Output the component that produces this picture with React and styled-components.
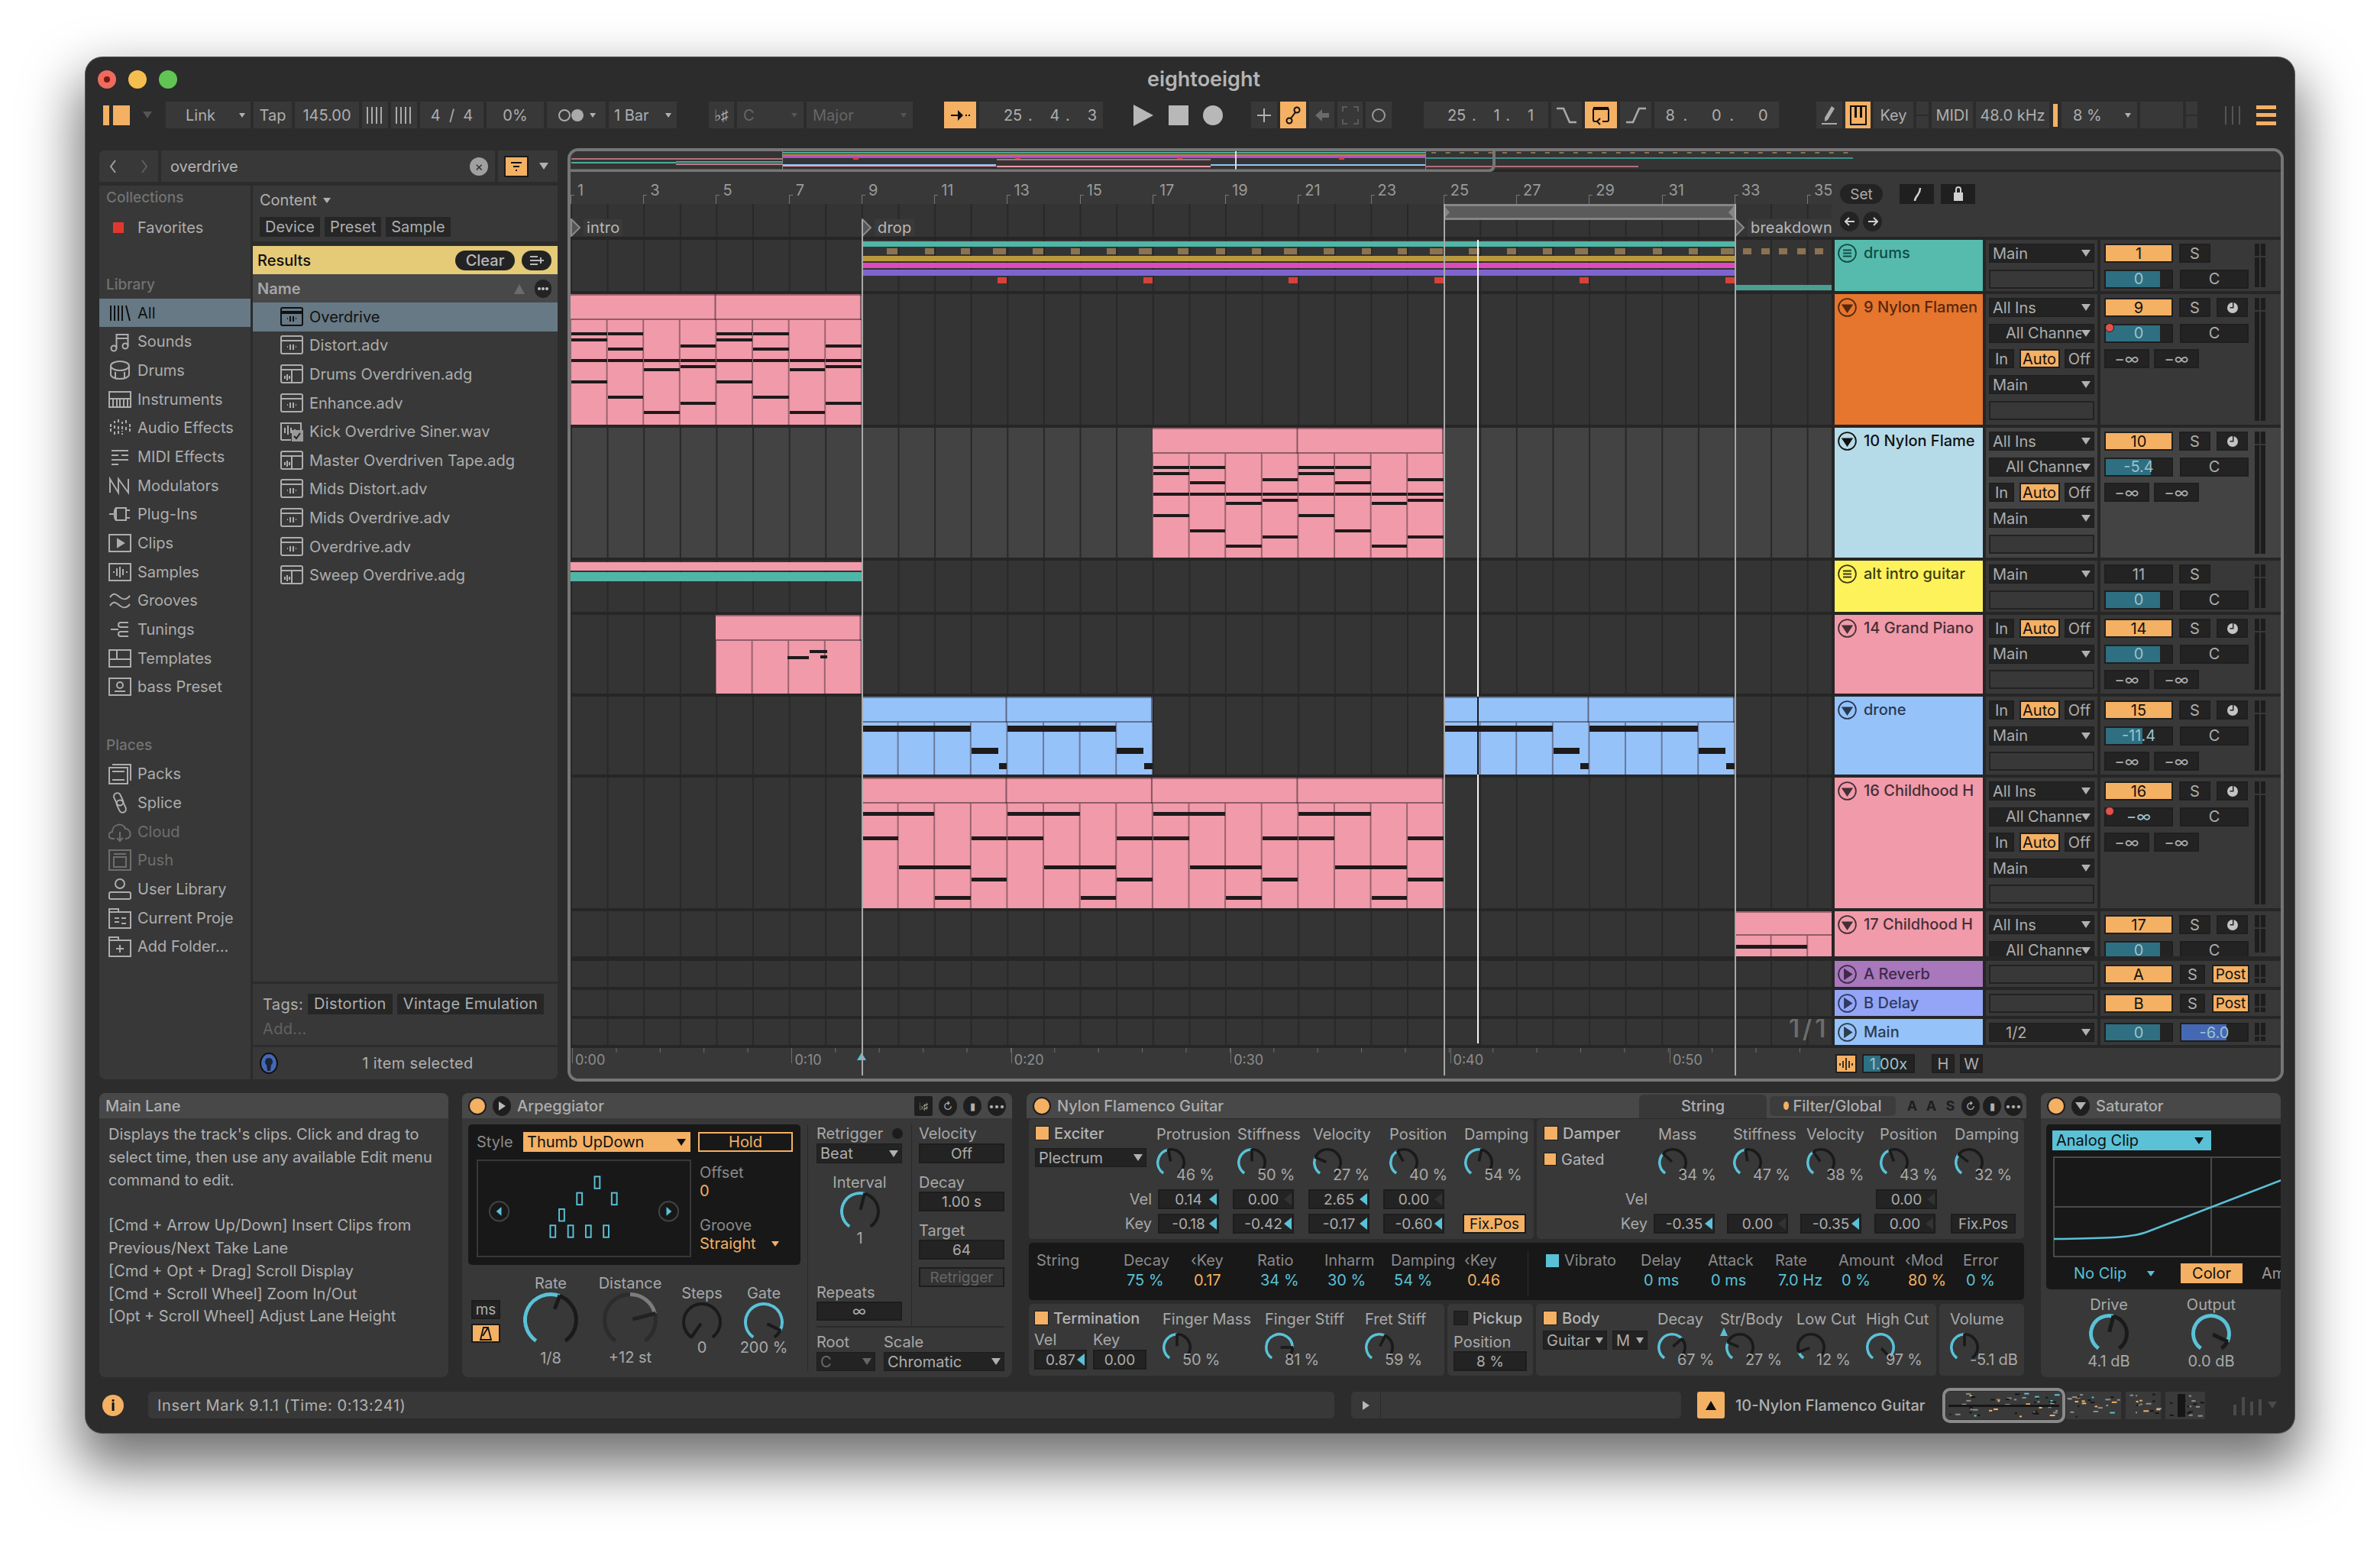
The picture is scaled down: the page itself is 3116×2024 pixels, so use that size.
import React from 'react';
import styled, { createGlobalStyle } from 'styled-components';

const ORANGE = '#f4b063';
const CYAN = '#5bc1d6';
const PINK = '#f19aa9';
const BLUE = '#96c2fa';
const BAR = 47.62;

const GlobalStyle = createGlobalStyle`
  html, body { margin: 0; background: #fff; }
  body { font-family: Inter, "Liberation Sans", sans-serif; font-size: 20px; color: #aeaeae; }
`;

const Page = styled.div`
  width: 3116px;
  height: 2024px;
  padding: 75px 0 0 112px;
  box-sizing: border-box;
  overflow: hidden;
`;

const Window = styled.div`
  width: 2892px;
  height: 1801px;
  background: #2c2c2c;
  border-radius: 22px;
  box-shadow: 0 0 0 1px #555, 0 36px 70px 10px rgba(0, 0, 0, 0.55);
  display: flex;
  flex-direction: column;
`;

/* title bar */
const TitleBar = styled.div`
  height: 58px;
  display: grid;
  grid-template-columns: 1fr auto 1fr;
  align-items: center;
  padding: 0 16px;
`;
const Lights = styled.div`
  display: flex;
  gap: 16px;
`;
const Light = styled.div`
  width: 24px;
  height: 24px;
  border-radius: 50%;
  background: ${p => p.$c};
  display: flex;
  align-items: center;
  justify-content: center;
  &::after {
    content: '';
    width: ${p => (p.$dot ? 8 : 0)}px;
    height: ${p => (p.$dot ? 8 : 0)}px;
    border-radius: 50%;
    background: #7a1510;
  }
`;
const Title = styled.div`
  font-size: 27px;
  font-weight: 600;
  color: #b4b4b4;
  padding-left: 36px;
  margin-top: -2px;
`;

/* toolbar */
const Toolbar = styled.div`
  height: 35px;
  display: flex;
  gap: 4px;
  padding-left: 23px;
`;
const Cell = styled.div`
  width: ${p => p.$w}px;
  margin-left: ${p => p.$ml || 0}px;
  flex: none;
  height: 35px;
  background: ${p => (p.$on ? ORANGE : p.$bare ? 'transparent' : '#383838')};
  color: ${p => (p.$on ? '#111' : p.$dim ? '#666' : '#aeaeae')};
  display: flex;
  align-items: center;
  justify-content: ${p => p.$align || 'center'};
  gap: 6px;
  padding: 0 ${p => p.$pad || 0}px 0 ${p => p.$pl || p.$pad || 0}px;
  box-sizing: border-box;
  white-space: pre;
  word-spacing: ${p => p.$ws || 0}px;
`;
const SmallCell = styled.div`
  width: ${p => p.$w}px;
  flex: none;
  height: 35px;
  display: flex;
  flex-direction: column;
  gap: 2px;
  &::before, &::after { content: ''; flex: 1; background: #383838; }
`;
const Caret = styled.span`
  flex: none;
  width: 0;
  height: 0;
  border-left: ${p => (p.$s || 10) / 2}px solid transparent;
  border-right: ${p => (p.$s || 10) / 2}px solid transparent;
  border-top: ${p => ((p.$s || 10) * 3) / 4}px solid ${p => p.$c || '#b0b0b0'};
`;
const Transport = styled.div`
  width: 117px;
  margin-left: 36px;
  flex: none;
  display: flex;
  align-items: center;
  justify-content: space-between;
`;
const Spacer = styled.div`
  flex: 1;
`;

/* main row */
const MainRow = styled.div`
  margin-top: 26px;
  padding-left: 18px;
  height: 1222px;
  display: flex;
  align-items: flex-start;
`;

/* browser */
const Browser = styled.div`
  width: 600px;
  margin-top: 3px;
  height: 1216px;
  flex: none;
  display: flex;
  flex-direction: column;
  gap: 5px;
`;
const SearchRow = styled.div`
  height: 41px;
  display: flex;
  gap: 4px;
`;
const NavBox = styled.div`
  width: 77px;
  flex: none;
  background: #383838;
  display: flex;
  align-items: center;
  justify-content: space-between;
  padding: 0 12px 0 12px;
  box-sizing: border-box;
  border-radius: 6px 0 0 0;
`;
const SearchField = styled.div`
  flex: 1;
  background: #383838;
  display: flex;
  align-items: center;
  justify-content: space-between;
  padding: 0 9px 0 12px;
  font-size: 20px;
  color: #b4b4b4;
`;
const ClearDot = styled.div`
  width: 24px;
  height: 24px;
  border-radius: 50%;
  background: #a0a0a0;
  color: #2c2c2c;
  font-size: 17px;
  line-height: 24px;
  text-align: center;
`;
const FilterBox = styled.div`
  width: 78px;
  flex: none;
  background: #383838;
  display: flex;
  align-items: center;
  gap: 14px;
  padding-left: 8px;
  box-sizing: border-box;
`;
const FilterBtn = styled.div`
  width: 32px;
  height: 28px;
  background: ${ORANGE};
  border: 2px solid #1a1a1a;
  box-sizing: border-box;
  display: flex;
  align-items: center;
  justify-content: center;
`;
const BrowserBody = styled.div`
  flex: 1;
  display: flex;
  gap: 3px;
  min-height: 0;
`;
const Sidebar = styled.div`
  width: 198px;
  flex: none;
  background: #383838;
  border-radius: 0 0 0 8px;
  overflow: hidden;
`;
const SideHead = styled.div`
  height: 32px;
  line-height: 32px;
  margin-top: ${p => p.$mt || 0}px;
  padding-left: 9px;
  font-size: 19px;
  font-weight: 500;
  color: #727272;
`;
const SideRow = styled.div`
  height: 37.7px;
  display: flex;
  align-items: center;
  gap: 8px;
  padding-left: 12px;
  margin-top: ${p => p.$mt || 0}px;
  background: ${p => (p.$sel ? '#667985' : 'none')};
  color: ${p => (p.$sel ? '#111' : p.$dim ? '#6e6e6e' : '#adadad')};
  font-size: 20px;
  white-space: nowrap;
`;
const SideText = styled.span`
  width: 128px;
  overflow: hidden;
`;
const SideIcon = styled.svg`
  width: 30px;
  height: 30px;
  flex: none;
  fill: none;
  stroke: currentColor;
  stroke-width: 2;
`;
const ContentCol = styled.div`
  flex: 1;
  display: flex;
  flex-direction: column;
  min-width: 0;
`;
const ContentTop = styled.div`
  height: 73px;
  background: #383838;
  margin-bottom: 6px;
  padding: 7px 9px;
  box-sizing: border-box;
`;
const ContentTitle = styled.div`
  height: 24px;
  line-height: 24px;
  display: flex;
  align-items: center;
  gap: 8px;
  color: #b0b0b0;
`;
const Tabs = styled.div`
  display: flex;
  gap: 6px;
  margin-top: 10px;
`;
const Tab = styled.div`
  height: 26px;
  line-height: 26px;
  padding: 0 7px;
  background: #262626;
  color: #adadad;
`;
const ResultsBar = styled.div`
  height: 37px;
  background: #e5ca78;
  display: flex;
  align-items: center;
  gap: 9px;
  padding: 0 8px 0 6px;
  color: #111;
  font-weight: 500;
`;
const Pill = styled.div`
  height: ${p => p.$h || 26}px;
  width: ${p => p.$w}px;
  border-radius: 13px;
  background: #232323;
  color: #b8b8b8;
  text-align: center;
  display: flex;
  align-items: center;
  justify-content: center;
  flex: none;
`;
const NameHead = styled.div`
  height: 38px;
  background: #484848;
  display: flex;
  align-items: center;
  padding: 0 8px 0 6px;
  font-weight: 600;
  color: #a6a6a6;
`;
const SortMark = styled.span`
  width: 0;
  height: 0;
  border-left: 7px solid transparent;
  border-right: 7px solid transparent;
  border-bottom: 13px solid #6c6c6c;
  margin-right: 13px;
`;
const FileList = styled.div`
  flex: 1;
  background: #383838;
`;
const FileRow = styled.div`
  height: 37.6px;
  display: flex;
  align-items: center;
  gap: 8px;
  padding-left: 36px;
  background: ${p => (p.$sel ? '#667985' : 'none')};
  color: ${p => (p.$sel ? '#111' : '#adadad')};
  &:first-child { margin-top: -1px; }
`;
const TagsBox = styled.div`
  height: 80px;
  margin-top: 3px;
  background: #383838;
  padding: 13px 13px;
  box-sizing: border-box;
  letter-spacing: 0.35px;
`;
const TagLine = styled.div`
  display: flex;
  gap: 6px;
  align-items: center;
`;
const TagChip = styled.div`
  height: 27px;
  line-height: 27px;
  padding: 0 8px;
  background: #262626;
`;
const AddTag = styled.div`
  margin-top: 7px;
  color: #626262;
`;
const BrowserFoot = styled.div`
  height: 42px;
  margin-top: 3px;
  background: #383838;
  border-radius: 0 0 8px 0;
  display: flex;
  align-items: center;
  padding-left: 9px;
`;
const FootText = styled.div`
  flex: 1;
  text-align: center;
  color: #b0b0b0;
  letter-spacing: 0.35px;
`;

/* arrangement */
const Arrangement = styled.div`
  margin-left: 13px;
  width: 2247px;
  height: 1222px;
  flex: none;
  border: 4px solid #767676;
  border-radius: 14px;
  box-sizing: border-box;
  background: #262626;
  position: relative;
  overflow: hidden;
`;
const Overview = styled.svg`
  display: block;
  width: 2239px;
  height: 27px;
  background: #343434;
`;
const TopArea = styled.div`
  display: flex;
  height: 85px;
  background: #383838;
  margin-bottom: 4px;
`;
const TopLeft = styled.div`
  width: 1651px;
  flex: none;
`;
const Ruler = styled.div`
  height: 42px;
  display: flex;
  overflow: hidden;
`;
const RulerCell = styled.div`
  width: ${BAR * 2}px;
  flex: none;
  box-sizing: border-box;
  font-size: 20px;
  color: #9a9a9a;
  padding: 12px 0 0 9px;
  position: relative;
  &::before {
    content: '';
    position: absolute;
    left: 0;
    bottom: 0;
    height: 12px;
    width: 5px;
    border-left: 1px solid #777;
    border-top: 1px solid #777;
    box-sizing: border-box;
  }
`;
const gridBg = (bg, width = BAR) => `
  background-color: ${bg};
  background-image: linear-gradient(to right, #282828 0 2px, transparent 2px);
  background-size: ${width}px 100%;
`;
const LocatorLane = styled.div`
  height: 43px;
  position: relative;
  overflow: hidden;
  ${gridBg('#343434')}
`;
const LoopBrace = styled.div`
  position: absolute;
  left: 1143px;
  width: 381px;
  top: 0;
  height: 21px;
  background: #5b5b5b;
  border: 3px solid #858585;
  border-left-width: 2px;
  border-right-width: 2px;
  box-sizing: border-box;
  display: flex;
  justify-content: space-between;
  align-items: center;
  &::before, &::after {
    content: '';
    width: 0;
    height: 0;
    border-top: 7px solid transparent;
    border-bottom: 7px solid transparent;
  }
  &::before { border-left: 6px solid #858585; }
  &::after { border-right: 6px solid #858585; }
`;
const Locator = styled.div`
  position: absolute;
  left: ${p => p.$x}px;
  top: 19px;
  height: 24px;
  display: flex;
  align-items: center;
  gap: 3px;
`;
const LocatorTag = styled.div`
  background: #3a3a3a;
  color: #b8b8b8;
  line-height: 22px;
  height: 22px;
  padding: 0 4px;
  letter-spacing: 0.2px;
`;
const SideTools = styled.div`
  flex: 1;
  padding: 16px 0 0 11px;
  box-sizing: border-box;
`;
const ToolLine = styled.div`
  display: flex;
  gap: ${p => p.$gap || 9}px;
  margin-bottom: 10px;
`;
const RoundTool = styled.div`
  height: 26px;
  width: ${p => p.$w}px;
  margin-right: ${p => p.$mr || 0}px;
  border-radius: 13px;
  background: #232323;
  color: #aaa;
  font-size: 19px;
  display: flex;
  align-items: center;
  justify-content: center;
`;
const SquareTool = styled.div`
  height: 26px;
  width: 45px;
  background: #1f1f1f;
  display: flex;
  align-items: center;
  justify-content: center;
`;
const TrackRow = styled.div`
  height: ${p => p.$h}px;
  margin-bottom: ${p => p.$gap || 4}px;
  display: flex;
  overflow: hidden;
`;
const Lane = styled.div`
  width: 1651px;
  flex: none;
  position: relative;
  overflow: hidden;
  ${p => gridBg(p.$sel ? '#434343' : '#343434')}
`;
const Head = styled.div`
  width: 194px;
  margin-left: 4px;
  flex: none;
  background: ${p => p.$c};
  color: ${p => p.$ink};
  display: flex;
  align-items: flex-start;
  padding: 5px 8px 0 4px;
  box-sizing: border-box;
  font-weight: 500;
`;
const HeadGlyph = styled.svg`
  width: 25px;
  height: 25px;
  flex: none;
  margin-right: 9px;
  fill: none;
  stroke: currentColor;
  stroke-width: 1.8;
`;
const HeadName = styled.div`
  line-height: 25px;
  white-space: nowrap;
  overflow: hidden;
  flex: 1;
`;
const Routing = styled.div`
  width: 146px;
  margin-left: 4px;
  flex: none;
  background: ${p => (p.$sel ? '#434343' : '#383838')};
  padding: 5px 4px 0;
  box-sizing: border-box;
  display: flex;
  flex-direction: column;
  gap: 8.7px;
`;
const MixerCol = styled.div`
  width: 237px;
  margin-left: 4px;
  flex: none;
  background: ${p => (p.$sel ? '#434343' : '#383838')};
  padding: 5px 0 5px 5px;
  box-sizing: border-box;
  display: flex;
`;
const MixRows = styled.div`
  width: 189px;
  flex: none;
  display: flex;
  flex-direction: column;
  gap: 8.7px;
`;
const MixLine = styled.div`
  display: flex;
  gap: ${p => p.$gap || 9}px;
`;
const Sel = styled.div`
  height: ${p => p.$h || 25}px;
  margin-top: ${p => p.$mt || 0}px;
  flex: none;
  width: ${p => p.$w ? p.$w + 'px' : 'auto'};
  background: #232323;
  box-sizing: border-box;
  border: 1px solid #1d1d1d;
  display: flex;
  align-items: center;
  justify-content: space-between;
  padding: 0 4px 0 ${p => p.$lp || 4}px;
  color: ${p => p.$dim ? '#6a6a6a' : '#adadad'};
  white-space: nowrap;
  overflow: hidden;
`;
const ClipText = styled.span`
  overflow: hidden;
  white-space: nowrap;
  flex: 1;
  min-width: 0;
`;
const BlankBox = styled.div`
  height: 25px;
  flex: none;
  background: #383838;
  border: 2px solid #222;
  box-sizing: border-box;
`;
const IoLine = styled.div`
  display: flex;
  justify-content: space-between;
`;
const Btn = styled.div`
  height: 25px;
  width: ${p => p.$w}px;
  margin-left: ${p => p.$ml || 0}px;
  flex: none;
  box-sizing: border-box;
  background: ${p => (p.$on ? ORANGE : '#232323')};
  color: ${p => (p.$on ? '#111' : '#adadad')};
  border: 2px solid #1f1f1f;
  display: flex;
  align-items: center;
  justify-content: center;
  font-size: ${p => p.$fs || 20}px;
  white-space: nowrap;
`;
const Fader = styled.div`
  height: 25px;
  width: ${p => p.$w || 90}px;
  flex: none;
  box-sizing: border-box;
  background: #232323;
  border: 2px solid #1f1f1f;
  position: relative;
  display: flex;
  align-items: center;
  justify-content: center;
  color: #9cc2cc;
`;
const FaderFill = styled.div`
  position: absolute;
  left: 0;
  top: 0;
  bottom: 0;
  background: ${p => p.$c};
`;
const FaderText = styled.span`
  position: relative;
`;
const ClipDot = styled.div`
  position: absolute;
  left: -1px;
  top: -3px;
  width: 10px;
  height: 10px;
  border-radius: 50%;
  background: #e6504a;
  border: 1px solid #222;
`;
const Meter = styled.div`
  width: 14px;
  margin-left: 8px;
  flex: none;
  background:
    linear-gradient(#383838, #383838) 0 16px / 100% 2px no-repeat,
    linear-gradient(to right, #1d1d1d 0 6px, #383838 6px 8px, #1d1d1d 8px);
`;
const Clip = styled.div`
  position: absolute;
  top: ${p => p.$top || 0}px;
  bottom: 0;
  background: ${p => p.$c};
  box-shadow: inset 0 2px 0 rgba(60, 30, 40, 0.45);
  overflow: hidden;
`;
const ClipHeader = styled.div`
  height: ${p => p.$h}px;
  background-image: linear-gradient(to right, rgba(50, 30, 40, 0.55) 0 2px, transparent 2px);
  background-size: ${BAR * 4}px 100%;
  background-position: -2px 0;
  border-bottom: 2px solid rgba(50, 30, 40, 0.5);
`;
const ClipNotes = styled.div`
  position: absolute;
  left: 0;
  right: 0;
  top: ${p => p.$top}px;
  bottom: 0;
  background-image: linear-gradient(to right, rgba(50, 30, 40, 0.45) 0 1.5px, transparent 1.5px);
  background-size: ${BAR}px 100%;
  background-position: -1px 0;
`;
const Note = styled.div`
  position: absolute;
  background: #1e1a1b;
`;
const Strip = styled.div`
  position: absolute;
  left: 381px;
  width: 1143px;
  top: ${p => p.$y}px;
  height: ${p => p.$h}px;
  background: ${p => p.$c};
`;
const Block = styled.div`
  position: absolute;
  background: ${p => p.$c};
`;
const ViewLabel = styled.div`
  position: absolute;
  right: 4px;
  bottom: 1px;
  font-size: 36px;
  font-weight: 500;
  letter-spacing: 3px;
  color: #6c6c6c;
`;
const VLine = styled.div`
  position: absolute;
  width: 2px;
  background: ${p => p.$c};
  pointer-events: none;
`;
const BottomRow = styled.div`
  height: 40px;
  display: flex;
  background: #383838;
`;
const TimeRuler = styled.div`
  width: 1651px;
  flex: none;
  display: flex;
  padding-left: 2px;
  box-sizing: border-box;
  position: relative;
  overflow: hidden;
  background-image: linear-gradient(to right, #6e6e6e 0 1px, transparent 1px);
  background-size: 57.4px 6px;
  background-position: 2px 0;
  background-repeat: repeat-x;
`;
const TimeCell = styled.div`
  width: 287.4px;
  flex: none;
  box-sizing: border-box;
  font-size: 18px;
  color: #8c8c8c;
  padding: 4px 0 0 3px;
  height: 20px;
  border-left: 1px solid #6e6e6e;
  line-height: 24px;
`;
const PlayStart = styled.div`
  position: absolute;
  left: 375px;
  top: 6px;
  width: 0;
  height: 0;
  border-left: 6px solid transparent;
  border-right: 6px solid transparent;
  border-bottom: 10px solid ${CYAN};
`;
const ZoomTools = styled.div`
  margin-left: 5px;
  padding-top: 8px;
  display: flex;
  gap: 7px;
`;

/* bottom devices */
const DeviceRow = styled.div`
  margin-top: 15px;
  padding-left: 18px;
  height: 372px;
  display: flex;
  align-items: stretch;
`;
const Panel = styled.div`
  width: ${p => p.$w}px;
  margin-left: ${p => p.$ml || 0}px;
  flex: none;
  background: #383838;
  border-radius: 8px;
  overflow: hidden;
  display: flex;
  flex-direction: column;
`;
const PanelHead = styled.div`
  height: 33px;
  flex: none;
  background: #484848;
  display: flex;
  align-items: center;
  padding: 0 8px;
  color: #aeaeae;
  font-weight: 500;
  gap: 8px;
`;
const LaneText = styled.div`
  padding: 7px 12px 0;
  line-height: 29.8px;
  font-size: 20px;
  color: #b0b0b0;
  white-space: pre-line;
`;
const PowerDot = styled.div`
  width: 24px;
  height: 24px;
  flex: none;
  border-radius: 50%;
  background: ${ORANGE};
  border: 2px solid #1e1e1e;
  box-sizing: border-box;
`;
const RoundIcon = styled.div`
  width: 24px;
  height: 26px;
  flex: none;
  border-radius: ${p => (p.$square ? '2px' : '50%')};
  background: #1e1e1e;
  display: flex;
  align-items: center;
  justify-content: center;
  color: #b0b0b0;
  font-size: 13px;
`;
const HeadIcons = styled.div`
  margin-left: ${p => p.$ml || 'auto'};
  display: flex;
  gap: ${p => p.$gap || 8}px;
  align-items: center;
`;
const Tri = styled.span`
  flex: none;
  width: 0;
  height: 0;
  border-top: 6px solid transparent;
  border-bottom: 6px solid transparent;
  border-left: 9px solid #b8b8b8;
`;

const ArpBody = styled.div`
  flex: 1;
  display: flex;
  padding-left: 8px;
`;
const ArpLeft = styled.div`
  width: 435px;
  flex: none;
  display: flex;
  flex-direction: column;
`;
const ArpDisplay = styled.div`
  margin-top: 8px;
  height: 184px;
  background: #181818;
  border-radius: 5px;
  padding: 10px 9px 0 11px;
  box-sizing: border-box;
`;
const ArpTopLine = styled.div`
  display: flex;
  align-items: center;
  height: 26px;
  gap: 10px;
`;
const ArpLabel = styled.div`
  width: 51px;
  color: #8a8a8a;
  flex: none;
`;
const OrangeSelect = styled.div`
  width: ${p => p.$w}px;
  height: 26px;
  background: ${ORANGE};
  color: #111;
  display: flex;
  align-items: center;
  justify-content: space-between;
  padding: 0 6px 0 5px;
  box-sizing: border-box;
  flex: none;
`;
const HoldBtn = styled.div`
  width: 124px;
  height: 26px;
  box-sizing: border-box;
  border: 2px solid ${ORANGE};
  color: ${ORANGE};
  text-align: center;
  line-height: 22px;
  flex: none;
`;
const ArpLower = styled.div`
  display: flex;
  margin-top: 10px;
  gap: 11px;
`;
const ArpGraph = styled.svg`
  width: 281px;
  height: 128px;
  flex: none;
  border: 2px solid #383838;
  box-sizing: border-box;
`;
const ArpSide = styled.div`
  flex: 1;
  min-width: 0;
`;
const SideLine = styled.div`
  height: 24px;
  line-height: 24px;
  margin-top: ${p => p.$mt || 0}px;
  color: ${p => p.$c || '#8a8a8a'};
  display: flex;
  align-items: center;
  gap: 20px;
`;
const KnobRow = styled.div`
  display: flex;
  padding-left: 4px;
`;
const MsCol = styled.div`
  width: 38px;
  flex: none;
  padding-top: 46px;
  display: flex;
  flex-direction: column;
  gap: 6px;
  margin-right: ${p => p.$mr || 0}px;
`;
const KnobCol = styled.div`
  width: ${p => p.$w}px;
  margin-left: ${p => p.$ml || 0}px;
  flex: none;
  padding-top: ${p => p.$pt}px;
  display: flex;
  flex-direction: column;
  align-items: center;
`;
const KLabel = styled.div`
  height: 24px;
  line-height: 24px;
  white-space: nowrap;
  color: #a8a8a8;
  margin-top: ${p => p.$mt || 0}px;
`;
const KSvg = styled.svg`
  display: block;
  flex: none;
`;
const ArpRight = styled.div`
  flex: 1;
  margin-left: 9px;
  padding-left: 11px;
  border-left: 1px solid #2a2a2a;
  margin-top: 8px;
  margin-bottom: 11px;
  padding-right: 10px;
  display: flex;
  flex-direction: column;
`;
const ArpCols = styled.div`
  display: flex;
  height: 264px;
  border-bottom: 2px solid #2a2a2a;
`;
const ArpColA = styled.div`
  width: 113px;
  flex: none;
  display: flex;
  flex-direction: column;
`;
const ArpColB = styled.div`
  flex: 1;
  margin-left: 11px;
  padding-left: 9px;
  border-left: 1px solid #2a2a2a;
  display: flex;
  flex-direction: column;
`;
const Cap = styled.div`
  height: 24px;
  line-height: 24px;
  margin-top: ${p => p.$mt || 0}px;
  text-align: ${p => p.$center ? 'center' : 'left'};
  color: #a8a8a8;
  white-space: nowrap;
  display: flex;
  align-items: center;
  justify-content: ${p => p.$center ? 'center' : 'space-between'};
`;
const Box = styled.div`
  height: ${p => p.$h || 26}px;
  width: ${p => p.$w ? p.$w + 'px' : 'auto'};
  margin-top: ${p => p.$mt || 0}px;
  margin-left: ${p => p.$ml || 0}px;
  flex: none;
  background: ${p => (p.$on ? ORANGE : p.$ghost ? '#333' : '#232323')};
  color: ${p => (p.$on ? '#111' : p.$ghost ? '#666' : '#adadad')};
  box-sizing: border-box;
  border: 2px solid ${p => (p.$on ? '#1a1a1a' : '#1d1d1d')};
  display: flex;
  align-items: center;
  justify-content: center;
  position: relative;
  white-space: nowrap;
  font-size: 19px;
`;
const BoxArrow = styled.span`
  position: absolute;
  right: 1px;
  top: 3px;
  width: 0;
  height: 0;
  border-top: 8px solid transparent;
  border-bottom: 8px solid transparent;
  border-right: 10px solid ${p => (p.$dim ? '#333' : CYAN)};
`;
const RootLine = styled.div`
  display: flex;
  gap: 11px;
  padding-top: 7px;
`;
const RootCol = styled.div`
  width: ${p => p.$w}px;
  flex: none;
`;

/* nylon */
const NylonHead = styled(PanelHead)`
  padding-right: 5px;
`;
const StringTab = styled.div`
  margin-left: auto;
  width: 167px;
  height: 31px;
  align-self: flex-end;
  background: #383838;
  border-radius: 6px 6px 0 0;
  text-align: center;
  line-height: 31px;
  flex: none;
`;
const FilterTab = styled.div`
  width: 165px;
  height: 26px;
  margin-left: -4px;
  background: #3c3c3c;
  border-radius: 5px;
  display: flex;
  align-items: center;
  justify-content: center;
  gap: 5px;
  flex: none;
`;
const OnDot = styled.span`
  width: 7px;
  height: 11px;
  border-radius: 50%;
  background: ${ORANGE};
`;
const LetterBtn = styled.span`
  font-size: 18px;
  font-weight: 700;
  color: #1e1e1e;
  width: 21px;
  text-align: center;
`;
const NylonBody = styled.div`
  flex: 1;
  background: #2c2c2c;
  padding: 1px 3px 3px;
  display: flex;
  flex-direction: column;
  gap: 5px;
`;
const NyRow = styled.div`
  display: flex;
  gap: 4px;
`;
const Section = styled.div`
  width: ${p => p.$w}px;
  height: ${p => p.$h}px;
  flex: ${p => (p.$w ? 'none' : '1')};
  background: #383838;
  border-radius: 5px;
  padding-left: ${p => p.$pl || 0}px;
  box-sizing: border-box;
  overflow: hidden;
  display: ${p => (p.$row ? 'flex' : 'block')};
`;
const SecTop = styled.div`
  height: 92px;
  display: flex;
`;
const SecLead = styled.div`
  width: ${p => p.$w}px;
  flex: none;
  padding-top: 8px;
`;
const Toggle = styled.div`
  display: flex;
  align-items: center;
  gap: 6px;
  height: 21px;
  color: #b4b4b4;
  font-weight: ${p => p.$bold ? 500 : 400};
  margin-bottom: ${p => p.$mb || 0}px;
  white-space: nowrap;
`;
const ToggleBox = styled.span`
  width: ${p => p.$s || 19}px;
  height: ${p => p.$s || 19}px;
  flex: none;
  background: ${p => (p.$on ? p.$c || ORANGE : '#232323')};
  border: 1px solid #1a1a1a;
  box-sizing: border-box;
`;
const NyCol = styled.div`
  width: ${p => p.$w}px;
  flex: none;
  padding-top: 8px;
`;
const KnobLine = styled.div`
  margin-top: 6px;
  margin-left: ${p => p.$ml || 0}px;
  display: flex;
  height: 46px;
  white-space: nowrap;
`;
const KnobVal = styled.div`
  margin-left: -12px;
  align-self: flex-end;
  line-height: 22px;
  height: 22px;
  color: #a8a8a8;
  letter-spacing: -0.2px;
`;
const BoxLine = styled.div`
  display: flex;
  height: 26px;
  margin-top: ${p => p.$mt || 0}px;
  margin-bottom: ${p => (p.$mb === undefined ? 6 : p.$mb)}px;
  align-items: center;
`;
const SideTag = styled.div`
  width: ${p => p.$w}px;
  flex: none;
  text-align: ${p => p.$right ? 'right' : 'left'};
  padding-right: ${p => p.$right ? 8 : 0}px;
  box-sizing: border-box;
  color: #a8a8a8;
`;
const StringStrip = styled.div`
  height: 75px;
  background: #181818;
  border-radius: 5px;
  display: flex;
  padding-top: 10px;
  box-sizing: border-box;
  padding-left: 10px;
`;
const StrCol = styled.div`
  width: ${p => p.$w}px;
  flex: none;
  white-space: nowrap;
`;
const StrLabel = styled.div`
  height: 26px;
  line-height: 26px;
  color: #8a8a8a;
  display: flex;
  align-items: center;
  gap: 6px;
`;
const StrValue = styled.div`
  height: 26px;
  line-height: 26px;
  color: ${p => (p.$warm ? ORANGE : CYAN)};
  padding-left: 4px;
`;
const StrDivider = styled.div`
  width: 1px;
  height: 60px;
  background: #2c2c2c;
  flex: none;
  margin-right: 22px;
`;

/* saturator */
const SatBody = styled.div`
  flex: 1;
  padding: 8px 0 0 7px;
`;
const SatDisplay = styled.div`
  height: 216px;
  background: #181818;
  border-radius: 5px 0 0 5px;
  padding: 8px 0 0 8px;
  box-sizing: border-box;
  overflow: hidden;
`;
const SatSelect = styled.div`
  width: 208px;
  height: 26px;
  background: ${CYAN};
  color: #111;
  display: flex;
  align-items: center;
  justify-content: space-between;
  padding: 0 10px 0 5px;
  box-sizing: border-box;
`;
const SatGraph = styled.svg`
  display: block;
  margin: 8px 0 0 1px;
  width: 299px;
  height: 132px;
`;
const SatFoot = styled.div`
  margin-top: 8px;
  height: 26px;
  display: flex;
  align-items: center;
  white-space: nowrap;
`;
const NoClip = styled.div`
  width: 168px;
  padding: 0 34px 0 28px;
  box-sizing: border-box;
  color: ${CYAN};
  display: flex;
  align-items: center;
  justify-content: space-between;
  flex: none;
`;
const ColorBtn = styled.div`
  width: 81px;
  height: 26px;
  line-height: 26px;
  background: ${ORANGE};
  color: #111;
  text-align: center;
  flex: none;
`;
const AmText = styled.div`
  margin-left: 25px;
  color: #9a9a9a;
`;
const SatKnobs = styled.div`
  display: flex;
`;

/* status bar */
const StatusBar = styled.div`
  margin-top: 19px;
  height: 35px;
  display: flex;
  align-items: center;
  padding-left: 22px;
`;
const InfoDot = styled.div`
  width: 28px;
  height: 28px;
  border-radius: 50%;
  background: ${ORANGE};
  color: #111;
  font-weight: 700;
  text-align: center;
  line-height: 28px;
  flex: none;
  margin-right: 32px;
`;
const StatusField = styled.div`
  width: ${p => p.$w}px;
  margin-right: ${p => p.$mr || 0}px;
  height: 35px;
  flex: none;
  background: #383838;
  border-radius: 5px;
  display: flex;
  align-items: center;
  padding-left: ${p => p.$pl || 0}px;
  box-sizing: border-box;
  color: #b0b0b0;
  letter-spacing: 0.6px;
`;
const PlayBox = styled.div`
  width: 38px;
  height: 35px;
  display: flex;
  align-items: center;
  justify-content: center;
  border-right: 1px solid #2c2c2c;
`;
const OrangeSquare = styled.div`
  width: 36px;
  height: 35px;
  background: ${ORANGE};
  flex: none;
  display: flex;
  align-items: center;
  justify-content: center;
  margin-right: 14px;
  border-radius: 3px;
`;
const UpMark = styled.span`
  width: 0;
  height: 0;
  border-left: 7px solid transparent;
  border-right: 7px solid transparent;
  border-bottom: 12px solid #111;
`;
const TrackName = styled.div`
  width: 271px;
  flex: none;
  font-weight: 500;
  color: #b0b0b0;
  white-space: nowrap;
`;
const Thumbs = styled.svg`
  width: 352px;
  height: 46px;
  flex: none;
`;
const MeterIcon = styled.svg`
  width: 60px;
  height: 30px;
  flex: none;
  margin-left: 28px;
`;

/* drawn parts */
const Knob = ({ d, v, from = 0, color = CYAN, rest = '#1a1a1a', sw = 4, inner = 0.25, needle = '#1a1a1a', mark }) => {
  const r = d / 2 - sw / 2;
  const c = d / 2;
  const at = (deg, rad) => {
    const a = ((deg - 90) * Math.PI) / 180;
    return [c + rad * Math.cos(a), c + rad * Math.sin(a)];
  };
  const deg = x => -145 + 290 * x;
  const arc = (a, b) => {
    const [x1, y1] = at(deg(a), r);
    const [x2, y2] = at(deg(b), r);
    return `M${x1} ${y1}A${r} ${r} 0 ${deg(b) - deg(a) > 180 ? 1 : 0} 1 ${x2} ${y2}`;
  };
  const [nx1, ny1] = at(deg(v), r * inner);
  const [nx2, ny2] = at(deg(v), r + 1);
  return (
    <KSvg width={d} height={d} fill="none" style={{ overflow: 'visible' }}>
      <path d={arc(0, 1)} stroke={rest} strokeWidth={sw} />
      {v !== from && <path d={arc(Math.min(from, v), Math.max(from, v))} stroke={color} strokeWidth={sw} />}
      <path d={`M${nx1} ${ny1}L${nx2} ${ny2}`} stroke={needle} strokeWidth={sw} />
      {mark && <path d="M-7 4l5-11 5 11z" fill={CYAN} />}
    </KSvg>
  );
};

const ICONS = {
  all: <path d="M3 5v20M8 5v20M13 5v20M18 5v20M23 5l5 20" />,
  sounds: <><circle cx="7" cy="24" r="3.5" /><circle cx="22" cy="21" r="3.5" /><path d="M10.5 24V6h15v15M10.5 11h15" /></>,
  drums: <><ellipse cx="15" cy="9" rx="12" ry="6" /><path d="M3 9v11c0 4 6 6 12 6s12-2 12-6V9M9 17v8M21 17v8" /></>,
  keys: <><rect x="1" y="5" width="28" height="20" /><path d="M1 14h28M6 14v11M11 14v11M15 14v11M20 14v11M25 14v11" /></>,
  audio: <path d="M3 10v10M8 6v3M8 12v5M8 20v4M13 4v6M13 13v12M18 7v3M18 13v7M18 22v2M23 5v6M23 14v6M28 10v10" strokeDasharray="4 2" />,
  midi: <path d="M4 7h22M4 13h9M17 13h9M4 19h22M4 25h9" />,
  mods: <path d="M2 24V6l11 18V6l13 18V6" />,
  plug: <><path d="M1 15h7M10 7h13v16H10zM10 7c-3 2-3 14 0 16M23 10h5M23 20h5" /></>,
  clips: <><rect x="1" y="4" width="28" height="22" /><path d="M12 10v10l8-5z" fill="currentColor" /></>,
  samples: <><rect x="1" y="4" width="28" height="22" /><path d="M6 15h2M11 10v10M15 8v14M19 11v8M23 15h2" /></>,
  grooves: <path d="M2 11c5-8 9-3 13 0s8 4 13-2M2 22c5-8 9-3 13 0s8 4 13-2" />,
  tunings: <path d="M3 15h10M26 6H16c-4 0-4 6 0 6h10M26 18H16c-4 0-4 6 0 6h10M3 15" />,
  templates: <><rect x="1" y="4" width="28" height="22" /><path d="M1 16h28M11 4v12" /></>,
  preset: <><rect x="1" y="4" width="28" height="22" /><circle cx="15" cy="13" r="4" /><path d="M8 21h14" /></>,
  packs: <><rect x="1" y="7" width="24" height="21" /><path d="M5 3h24v21M5 12h16M5 23h16" /></>,
  splice: <><rect x="9" y="2" width="9" height="17" rx="4.5" transform="rotate(-25 13 11)" /><rect x="12" y="11" width="9" height="17" rx="4.5" transform="rotate(-25 17 19)" /></>,
  cloud: <><path d="M8 24H6c-7 0-7-8-1-9 0-10 14-13 17-4 8 0 9 13 1 13h-1" /><path d="M15 15v12M11 23l4 4 4-4" /></>,
  push: <><rect x="1" y="2" width="28" height="26" /><rect x="7" y="11" width="16" height="13" /><path d="M7 7h16" /></>,
  user: <><circle cx="15" cy="8" r="6" /><rect x="1" y="19" width="28" height="9" rx="2" /></>,
  project: <><path d="M1 28V3h12v4h16v21zM1 7h12M8 15h6M8 20h6M17 15h6M17 22h6" /></>,
  add: <><path d="M1 28V3h12v4h16v21zM1 7h12M15 13v10M10 18h10" /></>,
};

const FileIcon = ({ kind }) => (
  <SideIcon viewBox="0 0 30 26" as="svg">
    {kind === 'wav' ? (
      <>
        <path d="M1 24V2h26v10M1 24h13M6 8v7M10 5v12M14 8v7M18 11h2" />
        <rect x="15" y="11" width="15" height="15" fill="#9a9a9a" stroke="none" />
        <path d="M18 19l3 3 5-7" stroke="#222" />
      </>
    ) : (
      <>
        <rect x="1" y="1" width="28" height="23" rx="2" />
        <path d="M1 7h28" strokeWidth={kind === 'sel' ? 4 : 2} />
        {kind === 'adg' ? <path d="M15 7v17M6 15v4M9 13v8M12 15v4" /> : <path d="M9 15h1M13 12v7M17 12v7M20 15h1" />}
      </>
    )}
  </SideIcon>
);

const Glyph = ({ kind }) => (
  <HeadGlyph viewBox="0 0 25 25">
    <circle cx="12.5" cy="12.5" r="11.4" />
    {kind === 'menu' && <path d="M7 8.5h11M7 12.5h11M7 16.5h11" />}
    {kind === 'down' && <path d="M6.5 9.5h12l-6 9z" fill="currentColor" />}
    {kind === 'right' && <path d="M9 6.5l9 6-9 6z" fill="currentColor" />}
  </HeadGlyph>
);

const Clock = () => (
  <svg width="16" height="16" viewBox="0 0 16 16"><circle cx="8" cy="8" r="7" fill="#c4c4c4" /><path d="M9.5 1v7.5H4.5v-1.5h3.5V1z" fill="#232323" /></svg>
);

const BarsIcon = ({ n = 4 }) => (
  <svg width="26" height="24" stroke="#aaa" strokeWidth="2">
    {Array.from({ length: n }).map((_, i) => <path key={i} d={`M${3 + i * 6} 1v22`} />)}
  </svg>
);

/* clip data */
const GUITAR_BARS = [[50, 58, 85, 113], [50, 70, 85, 133], [85, 97, 153], [66, 85, 93, 141]];

const pattern = (bars, total) => {
  const out = [];
  for (let b = 0; b < total; b++) bars[b % 4].forEach(y => out.push([b, 1, y, 4]));
  return out;
};
const repeat4 = (notes, times) => {
  const out = [];
  for (let t = 0; t < times; t++) notes.forEach(n => out.push([n[0] + t * 4, ...n.slice(1)]));
  return out;
};
const DRONE = repeat4([[0, 3, 38, 8], [3, 0.75, 67, 8], [3.75, 0.25, 87, 8]], 2);
const CHILD = repeat4([[0, 2, 45, 5], [0, 1, 77, 5], [3, 1, 77, 5], [1, 2, 115, 5], [3, 1, 131, 5], [2, 1, 155, 5]], 4);
const GRAND = [[1.95, 0.6, 54, 4], [2.55, 0.5, 46, 4], [2.85, 0.2, 53, 4]];

const TrackClip = ({ start, bars, color, notes = [], head = 32, top = 0 }) => (
  <Clip $c={color} $top={top} style={{ left: start * BAR, width: bars * BAR }}>
    <ClipHeader $h={head} />
    <ClipNotes $top={head + 2}>
      {notes.map(([b, len, y, h], i) => (
        <Note key={i} style={{ left: b * BAR + 1, width: len * BAR - 1, top: y - head - 2, height: h }} />
      ))}
    </ClipNotes>
  </Clip>
);

const DrumLane = () => {
  const seg = [];
  const red = [];
  for (let k = 0; k < 6; k++) {
    [[33, 14], [83, 12], [130, 12], [172, 17]].forEach(([o, w], i) =>
      seg.push(<Block key={`b${k}${i}`} $c="#8c7250" style={{ left: 381 + k * 190.5 + o, top: 11, width: w, height: 8 }} />));
    red.push(<Block key={`r${k}`} $c="#d6423a" style={{ left: 559 + k * 190.5, top: 49, width: 12, height: 8 }} />);
  }
  for (let i = 0; i < 5; i++) {
    seg.push(<Block key={`t${i}`} $c="#8c7250" style={{ left: 1535 + i * 23.6, top: 11, width: 11, height: 8 }} />);
  }
  return (
    <>
      <Strip $y={2} $h={7} $c="#50b6a7" />
      <Strip $y={21} $h={7} $c="#b89a3c" />
      <Strip $y={30} $h={7} $c="#e048bd" />
      <Strip $y={39} $h={8} $c="#7e64cf" />
      {seg}
      {red}
      <Block $c="#4a9f93" style={{ left: 1524, width: 127, top: 59, height: 7 }} />
    </>
  );
};

const LaneBody = ({ id }) => {
  switch (id) {
    case 'drums':
      return <DrumLane />;
    case 'n9':
      return <TrackClip start={0} bars={8} color={PINK} notes={pattern(GUITAR_BARS, 8)} />;
    case 'n10':
      return <TrackClip start={16} bars={8} color={PINK} notes={pattern(GUITAR_BARS, 8)} />;
    case 'alt':
      return (
        <>
          <Block $c={PINK} style={{ left: 0, width: 381, top: 2, height: 11 }} />
          <Block $c="#50b6a7" style={{ left: 0, width: 381, top: 15, height: 12 }} />
        </>
      );
    case 'n14':
      return <TrackClip start={4} bars={4} color={PINK} notes={GRAND} />;
    case 'drone':
      return (
        <>
          <TrackClip start={8} bars={8} color={BLUE} notes={DRONE} />
          <TrackClip start={24} bars={8} color={BLUE} notes={DRONE} />
        </>
      );
    case 'n16':
      return <TrackClip start={8} bars={16} color={PINK} notes={CHILD} />;
    case 'n17':
      return <TrackClip start={32} bars={2.67} color={PINK} head={30} notes={[[0, 2, 44, 5]]} />;
    case 'main':
      return <ViewLabel>1/1</ViewLabel>;
    default:
      return null;
  }
};

const TRACKS = [
  { id: 'drums', h: 67, c: '#56bbad', ink: '#124b43', g: 'menu', name: 'drums', routes: ['main', 'blank'], num: '1', on: true, fader: 82 },
  { id: 'n9', h: 171, c: '#e6752d', ink: '#55280c', g: 'down', name: '9 Nylon Flamen', routes: ['ins', 'chan', 'io', 'main', 'blank'], num: '9', on: true, arm: true, fader: 82, val: '0', dot: true, inf: true },
  { id: 'n10', h: 170, c: '#b6dbe8', ink: '#111', g: 'down', sel: true, name: '10 Nylon Flame', routes: ['ins', 'chan', 'io', 'main', 'blank'], num: '10', on: true, arm: true, fader: 69, val: '-5.4', inf: true },
  { id: 'alt', h: 67, c: '#fdf25a', ink: '#3d3b13', g: 'menu', name: 'alt intro guitar', routes: ['main', 'blank'], num: '11', fader: 82 },
  { id: 'n14', h: 103, c: PINK, ink: '#452f36', g: 'down', name: '14 Grand Piano', routes: ['io', 'main', 'blank'], num: '14', on: true, arm: true, fader: 82, inf: true },
  { id: 'drone', h: 102, c: BLUE, ink: '#28394f', g: 'down', name: 'drone', routes: ['io', 'main', 'blank'], num: '15', on: true, arm: true, fader: 56, val: '-11.4', inf: true },
  { id: 'n16', h: 171, c: PINK, ink: '#452f36', g: 'down', name: '16 Childhood H', routes: ['ins', 'chan', 'io', 'main', 'blank'], num: '16', on: true, arm: true, fader: 0, val: '−∞', dot: true, inf: true },
  { id: 'n17', h: 59, gap: 6, c: PINK, ink: '#452f36', g: 'down', name: '17 Childhood H', routes: ['ins', 'chan'], num: '17', on: true, arm: true, fader: 82 },
  { id: 'a', h: 34, c: '#a877bc', ink: '#3d2a48', g: 'right', name: 'A Reverb', routes: ['blank'], num: 'A', on: true, post: true },
  { id: 'b', h: 34, c: '#94a5f7', ink: '#2f3a63', g: 'right', name: 'B Delay', routes: ['blank'], num: 'B', on: true, post: true },
  { id: 'main', h: 34, c: BLUE, ink: '#2b3d50', g: 'right', name: 'Main', routes: ['half'], master: true },
];

const Route = ({ kind }) => {
  if (kind === 'blank') return <BlankBox />;
  if (kind === 'io') {
    return (
      <IoLine>
        <Btn $w={33}>In</Btn>
        <Btn $w={53} $on>Auto</Btn>
        <Btn $w={39}>Off</Btn>
      </IoLine>
    );
  }
  if (kind === 'chan') {
    return <Sel $lp={21}><ClipText>All Channe</ClipText><Caret $s={12} /></Sel>;
  }
  if (kind === 'half') {
    return <Sel $lp={21}><span>1/2</span><Caret $s={12} /></Sel>;
  }
  return <Sel><span>{kind === 'ins' ? 'All Ins' : 'Main'}</span><Caret $s={12} /></Sel>;
};

const TrackFader = ({ pct, val = '0', color = '#2e6f82', dot }) => (
  <Fader>
    <FaderFill $c={color} style={{ width: `${pct}%` }} />
    <FaderText>{val}</FaderText>
    {dot && <ClipDot />}
  </Fader>
);

const MixerBody = ({ t }) => {
  if (t.master) {
    return (
      <MixLine>
        <TrackFader pct={82} />
        <TrackFader pct={69} val="-6.0" color="#4568b5" />
      </MixLine>
    );
  }
  if (t.post) {
    return (
      <MixLine>
        <Btn $w={90} $on>{t.num}</Btn>
        <Btn $w={33}>S</Btn>
        <Btn $w={49} $on $fs={19}>Post</Btn>
      </MixLine>
    );
  }
  return (
    <>
      <MixLine $gap={8}>
        <Btn $w={90} $on={t.on}>{t.num}</Btn>
        <Btn $w={41}>S</Btn>
        {t.arm && <Btn $w={41}><Clock /></Btn>}
      </MixLine>
      <MixLine>
        <TrackFader pct={t.fader} val={t.val} dot={t.dot} />
        <Btn $w={90}>C</Btn>
      </MixLine>
      {t.inf && (
        <MixLine $gap={6}>
          <Btn $w={59}>−∞</Btn>
          <Btn $w={59}>−∞</Btn>
        </MixLine>
      )}
    </>
  );
};

const Track = ({ t }) => (
  <TrackRow $h={t.h} $gap={t.gap}>
    <Lane $sel={t.sel}><LaneBody id={t.id} /></Lane>
    <Head $c={t.c} $ink={t.ink}>
      <Glyph kind={t.g} />
      <HeadName>{t.name}</HeadName>
    </Head>
    <Routing $sel={t.sel}>
      {t.routes.map((r, i) => <Route key={i} kind={r} />)}
    </Routing>
    <MixerCol $sel={t.sel}>
      <MixRows><MixerBody t={t} /></MixRows>
      <Meter />
    </MixerCol>
  </TrackRow>
);

const OverviewMap = () => {
  const rects = [];
  const r = (x, y, w, h, c) => rects.push(<rect key={rects.length} x={x} y={y} width={w} height={h} fill={c} />);
  r(748, 207, 276, 2, '#b0707c');
  r(748, 212, 137, 2, '#4ea99b');
  r(885, 211, 139, 2, '#4ea99b');
  r(885, 214, 139, 2, '#c47f8c');
  r(1024, 199, 842, 2, '#4ea99b');
  r(1024, 202, 842, 1, '#b89a3c');
  r(1024, 203, 842, 2, '#e048bd');
  r(1024, 205, 842, 2, '#7e64cf');
  for (let k = 0; k < 4; k++) r(1117 + k * 212, 206, 7, 3, '#d6423a');
  r(1024, 215, 280, 2, BLUE);
  r(1024, 217, 280, 1, PINK);
  r(1305, 208, 280, 2, '#b0707c');
  r(1305, 217, 280, 2, PINK);
  r(1585, 215, 281, 2, BLUE);
  for (let i = 0; i < 30; i++) r(1874 + i * 18.6, 199, 6, 2, '#8c7250');
  r(1866, 206, 560, 2, '#3d8f84');
  r(1866, 217, 279, 2, '#b0707c');
  r(1024, 198, 1, 24, '#888');
  r(1866, 198, 1, 24, '#888');
  r(1617, 198, 2, 24, '#ddd');
  return (
    <Overview viewBox="747 198 2239 27">
      {rects}
      <rect x="747" y="222" width="2239" height="3" fill="#262626" />
      <path d="M744 223.5H1948q8 0 8-8V198" fill="none" stroke="#767676" strokeWidth="4" />
    </Overview>
  );
};

const LocatorMark = ({ x, label }) => (
  <Locator $x={x}>
    <svg width="14" height="24"><path d="M1 1l11 11L1 23z" fill="#555" stroke="#8a8a8a" strokeWidth="2" /></svg>
    <LocatorTag>{label}</LocatorTag>
  </Locator>
);

const thumbRects = () => {
  const out = [];
  let seed = 7;
  const rnd = () => { seed = (seed * 97 + 13) % 1009; return seed / 1009; };
  [[5, 152], [162, 72], [240, 46], [292, 52]].forEach(([x, w]) => {
    out.push(<rect key={`p${x}`} x={x} y="5" width={w} height="36" fill="#3a3a3a" />);
    for (let i = 0; i < w / 3; i++) {
      const c = rnd();
      out.push(<rect key={`${x}-${i}`} x={x + rnd() * (w - 4)} y={6 + rnd() * 31} width={2 + rnd() * 5} height="2" fill={c > 0.86 ? ORANGE : c > 0.74 ? CYAN : c > 0.35 ? '#8d8d8d' : '#161616'} />);
    }
  });
  out.push(<rect key="dark" x="8" y="22" width="145" height="3" fill="#161616" />);
  out.push(<rect key="dark2" x="308" y="8" width="10" height="30" fill="#161616" />);
  return out;
};

const SIDE_LIBRARY = [
  ['all', 'All'], ['sounds', 'Sounds'], ['drums', 'Drums'], ['keys', 'Instruments'], ['audio', 'Audio Effects'],
  ['midi', 'MIDI Effects'], ['mods', 'Modulators'], ['plug', 'Plug-Ins'], ['clips', 'Clips'], ['samples', 'Samples'],
  ['grooves', 'Grooves'], ['tunings', 'Tunings'], ['templates', 'Templates'], ['preset', 'bass Preset'],
];
const SIDE_PLACES = [
  ['packs', 'Packs'], ['splice', 'Splice'], ['cloud', 'Cloud', true], ['push', 'Push', true],
  ['user', 'User Library'], ['project', 'Current Proje'], ['add', 'Add Folder...'],
];
const FILES = [
  ['sel', 'Overdrive'], ['adv', 'Distort.adv'], ['adg', 'Drums Overdriven.adg'], ['adv', 'Enhance.adv'],
  ['wav', 'Kick Overdrive Siner.wav'], ['adg', 'Master Overdriven Tape.adg'], ['adv', 'Mids Distort.adv'],
  ['adv', 'Mids Overdrive.adv'], ['adv', 'Overdrive.adv'], ['adg', 'Sweep Overdrive.adg'],
];

const BrowserPanel = () => (
  <Browser>
    <SearchRow>
      <NavBox>
        <svg width="12" height="22" fill="none" stroke="#a0a0a0" strokeWidth="2"><path d="M9 3l-6 8 6 8" /></svg>
        <svg width="12" height="22" fill="none" stroke="#5e5e5e" strokeWidth="2"><path d="M3 3l6 8-6 8" /></svg>
      </NavBox>
      <SearchField>overdrive<ClearDot>×</ClearDot></SearchField>
      <FilterBox>
        <FilterBtn>
          <svg width="16" height="16" stroke="#111" strokeWidth="2"><path d="M1 3h14M4 8h8M7 13h2" /></svg>
        </FilterBtn>
        <Caret $s={12} />
      </FilterBox>
    </SearchRow>
    <BrowserBody>
      <Sidebar>
        <SideHead>Collections</SideHead>
        <SideRow $mt={4}>
          <svg width="14" height="14" style={{ margin: '0 10px 0 6px' }}><rect width="14" height="14" fill="#e2372f" /></svg>
          Favorites
        </SideRow>
        <SideHead $mt={40}>Library</SideHead>
        <SideRow $mt={2} $sel><SideIcon viewBox="0 0 30 30">{ICONS.all}</SideIcon><SideText>All</SideText></SideRow>
        {SIDE_LIBRARY.slice(1).map(([k, l]) => (
          <SideRow key={k}><SideIcon viewBox="0 0 30 30">{ICONS[k]}</SideIcon><SideText>{l}</SideText></SideRow>
        ))}
        <SideHead $mt={42}>Places</SideHead>
        <SideRow $mt={2}><SideIcon viewBox="0 0 30 30">{ICONS.packs}</SideIcon><SideText>Packs</SideText></SideRow>
        {SIDE_PLACES.slice(1).map(([k, l, dim]) => (
          <SideRow key={k} $dim={dim}><SideIcon viewBox="0 0 30 30">{ICONS[k]}</SideIcon><SideText>{l}</SideText></SideRow>
        ))}
      </Sidebar>
      <ContentCol>
        <ContentTop>
          <ContentTitle>Content <Caret $s={10} /></ContentTitle>
          <Tabs><Tab>Device</Tab><Tab>Preset</Tab><Tab>Sample</Tab></Tabs>
        </ContentTop>
        <ResultsBar>
          Results
          <Spacer />
          <Pill $w={78}>Clear</Pill>
          <Pill $w={39}>
            <svg width="20" height="16" stroke="#b8b8b8" strokeWidth="2"><path d="M1 3h10M1 8h10M1 13h10M15 4v8M11 8h8" /></svg>
          </Pill>
        </ResultsBar>
        <NameHead>
          Name
          <Spacer />
          <SortMark />
          <Pill $w={22} $h={24}><svg width="14" height="4" fill="#c0c0c0"><circle cx="2" cy="2" r="2" /><circle cx="7" cy="2" r="2" /><circle cx="12" cy="2" r="2" /></svg></Pill>
        </NameHead>
        <FileList>
          {FILES.map(([k, l], i) => <FileRow key={l} $sel={i === 0}><FileIcon kind={k} />{l}</FileRow>)}
        </FileList>
        <TagsBox>
          <TagLine>Tags:<TagChip>Distortion</TagChip><TagChip>Vintage Emulation</TagChip></TagLine>
          <AddTag>Add...</AddTag>
        </TagsBox>
        <BrowserFoot>
          <svg width="24" height="28"><ellipse cx="12" cy="14" rx="11" ry="13" fill="#4568b5" stroke="#111" strokeWidth="2" /><path d="M12 7a5 5 0 0 1 3 9l-1 8h-4l-1-8a5 5 0 0 1 3-9z" fill="#1c2436" /></svg>
          <FootText>1 item selected</FootText>
        </BrowserFoot>
      </ContentCol>
    </BrowserBody>
  </Browser>
);

const RULER = Array.from({ length: 18 }, (_, i) => 1 + i * 2);
const TIMES = ['0:00', '0:10', '0:20', '0:30', '0:40', '0:50'];

const ArrangementPanel = () => (
  <Arrangement>
    <OverviewMap />
    <TopArea>
      <TopLeft>
        <Ruler>{RULER.map(n => <RulerCell key={n}>{n}</RulerCell>)}</Ruler>
        <LocatorLane>
          <LoopBrace />
          <LocatorMark x={0} label="intro" />
          <LocatorMark x={381} label="drop" />
          <LocatorMark x={1524} label="breakdown" />
        </LocatorLane>
      </TopLeft>
      <SideTools>
        <ToolLine>
          <RoundTool $w={56} $mr={13}>Set</RoundTool>
          <SquareTool><svg width="14" height="20" stroke="#d0d0d0" strokeWidth="2.5" fill="none"><path d="M4 19c0-6 7-8 7-17" /></svg></SquareTool>
          <SquareTool><svg width="14" height="20" fill="#d0d0d0"><rect x="1" y="8" width="12" height="11" /><path d="M4 8V4a3 3 0 0 1 6 0v4" fill="none" stroke="#d0d0d0" strokeWidth="2" /></svg></SquareTool>
        </ToolLine>
        <ToolLine $gap={5}>
          <RoundTool $w={25}><svg width="14" height="12" fill="none" stroke="#d0d0d0" strokeWidth="2"><path d="M13 6H2M6 1L1 6l5 5" /></svg></RoundTool>
          <RoundTool $w={25}><svg width="14" height="12" fill="none" stroke="#d0d0d0" strokeWidth="2"><path d="M1 6h11M8 1l5 5-5 5" /></svg></RoundTool>
        </ToolLine>
      </SideTools>
    </TopArea>
    {TRACKS.map(t => <Track key={t.id} t={t} />)}
    <BottomRow>
      <TimeRuler>
        {TIMES.map(t => <TimeCell key={t}>{t}</TimeCell>)}
        <PlayStart />
      </TimeRuler>
      <ZoomTools>
        <Btn $w={28} $on>
          <svg width="18" height="20" stroke="#111" strokeWidth="1.6"><path d="M1 9v3M5 6v9M9 2v16M13 6v9M17 9v3" /></svg>
        </Btn>
        <Fader $w={69}>
          <FaderFill $c="#2e6f82" style={{ width: '34%' }} />
          <FaderText>1.00x</FaderText>
        </Fader>
        <Btn $w={30} $ml={15}>H</Btn>
        <Btn $w={30}>W</Btn>
      </ZoomTools>
    </BottomRow>
    <VLine $c="#a8a8a8" style={{ left: 381, top: 90, height: 1120 }} />
    <VLine $c="#a8a8a8" style={{ left: 1143, top: 69, height: 1141 }} />
    <VLine $c="#a8a8a8" style={{ left: 1524, top: 69, height: 1141 }} />
    <VLine $c="#f4f4f4" style={{ left: 1187, top: 116, height: 1052 }} />
    <VLine $c="#1a1a1a" style={{ left: 1187, top: 714, height: 102 }} />
  </Arrangement>
);

const ArpeggiatorPanel = () => (
  <Panel $w={720} $ml={18}>
    <PanelHead>
      <PowerDot />
      <RoundIcon><Tri /></RoundIcon>
      Arpeggiator
      <HeadIcons>
        <RoundIcon $square>♭♯</RoundIcon>
        <RoundIcon>↻</RoundIcon>
        <RoundIcon>▮</RoundIcon>
        <RoundIcon>•••</RoundIcon>
      </HeadIcons>
    </PanelHead>
    <ArpBody>
      <ArpLeft>
        <ArpDisplay>
          <ArpTopLine>
            <ArpLabel>Style</ArpLabel>
            <OrangeSelect $w={219}>Thumb UpDown<Caret $s={12} $c="#111" /></OrangeSelect>
            <HoldBtn>Hold</HoldBtn>
          </ArpTopLine>
          <ArpLower>
            <ArpGraph viewBox="0 0 281 128" fill="none">
              <ellipse cx="26" cy="68" rx="13" ry="13" stroke="#444" strokeWidth="2" />
              <path d="M29 62v12l-7-6z" fill={CYAN} />
              <ellipse cx="255" cy="68" rx="13" ry="13" stroke="#444" strokeWidth="2" />
              <path d="M252 62v12l7-6z" fill={CYAN} />
              {[[159, 21], [135, 43], [182, 43], [111, 65], [99, 87], [123, 87], [147, 87], [171, 87]].map(([x, y]) => (
                <rect key={`${x}${y}`} x={x - 4} y={y} width="7" height="16" stroke={CYAN} strokeWidth="2" />
              ))}
            </ArpGraph>
            <ArpSide>
              <SideLine $mt={5}>Offset</SideLine>
              <SideLine $c={ORANGE}>0</SideLine>
              <SideLine $mt={21}>Groove</SideLine>
              <SideLine $c={ORANGE}>Straight<Caret $s={10} $c={ORANGE} /></SideLine>
            </ArpSide>
          </ArpLower>
        </ArpDisplay>
        <KnobRow>
          <MsCol $mr={21}>
            <Box $h={25} $w={38}>ms</Box>
            <Box $h={25} $w={38} $on>
              <svg width="18" height="20" fill="none" stroke="#111" strokeWidth="1.8"><path d="M6 2h6l4 16H2zM5 13l7-11" /></svg>
            </Box>
          </MsCol>
          <KnobCol $w={90} $pt={12}>
            <KLabel>Rate</KLabel>
            <Knob d={72} v={0.57} sw={5} inner={0.45} />
            <KLabel $mt={2}>1/8</KLabel>
          </KnobCol>
          <KnobCol $w={90} $ml={14} $pt={12}>
            <KLabel>Distance</KLabel>
            <Knob d={72} v={0.76} from={0.5} color="#7c7c7c" rest="#2c2c2c" sw={5} inner={0.1} needle="#222" />
            <KLabel $mt={1}>+12 st</KLabel>
          </KnobCol>
          <KnobCol $w={70} $ml={14} $pt={25}>
            <KLabel>Steps</KLabel>
            <Knob d={52} v={0} sw={4} inner={0.1} />
            <KLabel $mt={-5}>0</KLabel>
          </KnobCol>
          <KnobCol $w={70} $ml={11} $pt={25}>
            <KLabel>Gate</KLabel>
            <Knob d={52} v={0.9} sw={4} inner={0.2} />
            <KLabel $mt={-5}>200 %</KLabel>
          </KnobCol>
        </KnobRow>
      </ArpLeft>
      <ArpRight>
        <ArpCols>
          <ArpColA>
            <Cap>Retrigger<svg width="14" height="18"><circle cx="7" cy="9" r="7" fill="#1c1c1c" /></svg></Cap>
            <Sel $w={112} $h={26} $mt={1}><span>Beat</span><Caret $s={12} /></Sel>
            <Cap $center $mt={13}>Interval</Cap>
            <KnobCol $w={113} $pt={0}><Knob d={52} v={0.55} sw={4} inner={0.1} /></KnobCol>
            <Cap $center $mt={-3}>1</Cap>
            <Cap $mt={47}>Repeats</Cap>
            <Box $w={112} $h={25}>∞</Box>
          </ArpColA>
          <ArpColB>
            <Cap>Velocity</Cap>
            <Box $mt={1}>Off</Box>
            <Cap $mt={13}>Decay</Cap>
            <Box>1.00 s</Box>
            <Cap $mt={13}>Target</Cap>
            <Box>64</Box>
            <Box $mt={10} $ghost>Retrigger</Box>
          </ArpColB>
        </ArpCols>
        <RootLine>
          <RootCol $w={77}>
            <Cap>Root</Cap>
            <Sel $dim $mt={1}><span>C</span><Caret $s={12} $c="#666" /></Sel>
          </RootCol>
          <RootCol $w={158}>
            <Cap>Scale</Cap>
            <Sel $mt={1}><span>Chromatic</span><Caret $s={12} /></Sel>
          </RootCol>
        </RootLine>
      </ArpRight>
    </ArpBody>
  </Panel>
);

const KnobParam = ({ label, w, v, val, shift, mark }) => (
  <NyCol $w={w}>
    <KLabel>{label}</KLabel>
    <KnobLine $ml={shift}>
      <Knob d={38} v={v} sw={3.6} inner={0.1} mark={mark} />
      <KnobVal>{val}</KnobVal>
    </KnobLine>
  </NyCol>
);
const ModBox = ({ w = 80, ml = 0, arrow, dim, children, on }) => (
  <Box $w={w} $on={on} $ml={ml}>
    {children}
    {arrow && <BoxArrow $dim={dim} />}
  </Box>
);

const STR_L = [['String', 114], ['Decay', 88], ['‹Key', 87], ['Ratio', 88], ['Inharm', 87], ['Damping', 96], ['‹Key', 83]];
const STR_V = ['', '75 %', '0.17', '34 %', '30 %', '54 %', '0.46'];
const VIB = [['Delay', 88, '0 ms'], ['Attack', 88, '0 ms'], ['Rate', 83, '7.0 Hz'], ['Amount', 87, '0 %'], ['‹Mod', 76, '80 %'], ['Error', 60, '0 %']];

const NylonPanel = () => (
  <Panel $w={1309} $ml={19}>
    <NylonHead>
      <PowerDot />
      Nylon Flamenco Guitar
      <StringTab>String</StringTab>
      <FilterTab><OnDot />Filter/Global</FilterTab>
      <HeadIcons $ml="3px" $gap={4}>
        <LetterBtn>A</LetterBtn>
        <LetterBtn>A</LetterBtn>
        <LetterBtn>S</LetterBtn>
        <RoundIcon>↻</RoundIcon>
        <RoundIcon>▮</RoundIcon>
        <RoundIcon>•••</RoundIcon>
      </HeadIcons>
    </NylonHead>
    <NylonBody>
      <NyRow>
        <Section $w={661} $h={157} $pl={8}>
          <SecTop>
            <SecLead $w={159}>
              <Toggle $bold $mb={9}><ToggleBox $on />Exciter</Toggle>
              <Sel $w={146}><span>Plectrum</span><Caret $s={12} /></Sel>
            </SecLead>
            <KnobParam label="Protrusion" w={106} v={0.46} val="46 %" />
            <KnobParam label="Stiffness" w={99} v={0.5} val="50 %" />
            <KnobParam label="Velocity" w={100} v={0.27} val="27 %" />
            <KnobParam label="Position" w={98} v={0.4} val="40 %" />
            <KnobParam label="Damping" w={91} v={0.54} val="54 %" />
          </SecTop>
          <BoxLine>
            <SideTag $w={161} $right>Vel</SideTag>
            <ModBox arrow>0.14</ModBox>
            <ModBox ml={18} arrow dim>0.00</ModBox>
            <ModBox ml={19} arrow>2.65</ModBox>
            <ModBox ml={18} arrow dim>0.00</ModBox>
          </BoxLine>
          <BoxLine>
            <SideTag $w={161} $right>Key</SideTag>
            <ModBox arrow>-0.18</ModBox>
            <ModBox ml={18} arrow>-0.42</ModBox>
            <ModBox ml={19} arrow>-0.17</ModBox>
            <ModBox ml={18} arrow>-0.60</ModBox>
            <ModBox w={83} ml={24} on>Fix.Pos</ModBox>
          </BoxLine>
        </Section>
        <Section $h={157} $pl={9}>
          <SecTop>
            <SecLead $w={150}>
              <Toggle $bold $mb={13}><ToggleBox $on />Damper</Toggle>
              <Toggle><ToggleBox $on $s={17} />Gated</Toggle>
            </SecLead>
            <KnobParam label="Mass" w={98} v={0.34} val="34 %" />
            <KnobParam label="Stiffness" w={96} v={0.47} val="47 %" />
            <KnobParam label="Velocity" w={96} v={0.38} val="38 %" />
            <KnobParam label="Position" w={98} v={0.43} val="43 %" />
            <KnobParam label="Damping" w={91} v={0.32} val="32 %" />
          </SecTop>
          <BoxLine>
            <SideTag $w={144} $right>Vel</SideTag>
            <ModBox ml={291} arrow dim>0.00</ModBox>
          </BoxLine>
          <BoxLine>
            <SideTag $w={144} $right>Key</SideTag>
            <ModBox arrow>-0.35</ModBox>
            <ModBox ml={16} arrow dim>0.00</ModBox>
            <ModBox ml={16} arrow>-0.35</ModBox>
            <ModBox ml={17} arrow dim>0.00</ModBox>
            <ModBox w={85} ml={20}>Fix.Pos</ModBox>
          </BoxLine>
        </Section>
      </NyRow>
      <StringStrip>
        {STR_L.map(([l, w], i) => (
          <StrCol key={i} $w={w}>
            <StrLabel>{l}</StrLabel>
            <StrValue $warm={i === 2 || i === 6}>{STR_V[i]}</StrValue>
          </StrCol>
        ))}
        <StrDivider />
        <StrCol $w={125}><StrLabel><ToggleBox $on $c={CYAN} />Vibrato</StrLabel></StrCol>
        {VIB.map(([l, w, v]) => (
          <StrCol key={l} $w={w}>
            <StrLabel>{l}</StrLabel>
            <StrValue $warm={l === '‹Mod'}>{v}</StrValue>
          </StrCol>
        ))}
      </StringStrip>
      <NyRow>
        <Section $w={544} $h={94} $pl={7} $row>
          <SecLead $w={168}>
            <Toggle $bold><ToggleBox $on />Termination</Toggle>
            <BoxLine $mt={5} $mb={0}>
              <SideTag $w={77}>Vel</SideTag>
              <SideTag $w={70}>Key</SideTag>
            </BoxLine>
            <BoxLine>
              <ModBox w={69} arrow>0.87</ModBox>
              <ModBox w={70} ml={8}>0.00</ModBox>
            </BoxLine>
          </SecLead>
          <KnobParam label="Finger Mass" w={134} v={0.5} val="50 %" />
          <KnobParam label="Finger Stiff" w={131} v={0.81} val="81 %" />
          <KnobParam label="Fret Stiff" w={95} v={0.59} val="59 %" />
        </Section>
        <Section $w={112} $h={94} $pl={8}>
          <SecLead $w={100}>
            <Toggle $bold><ToggleBox />Pickup</Toggle>
            <KLabel $mt={9}>Position</KLabel>
            <Box $w={96}>8 %</Box>
          </SecLead>
        </Section>
        <Section $w={524} $h={94} $pl={9} $row>
          <SecLead $w={150}>
            <Toggle $bold $mb={6}><ToggleBox $on />Body</Toggle>
            <MixLine $gap={7}>
              <Sel $w={84}><span>Guitar</span><Caret $s={11} /></Sel>
              <Sel $w={46}><span>M</span><Caret $s={11} /></Sel>
            </MixLine>
          </SecLead>
          <KnobParam label="Decay" w={82} v={0.67} val="67 %" />
          <KnobParam label="Str/Body" w={100} v={0.27} val="27 %" shift={7} mark />
          <KnobParam label="Low Cut" w={91} v={0.12} val="12 %" />
          <KnobParam label="High Cut" w={80} v={0.97} val="97 %" />
        </Section>
        <Section $h={94} $pl={14}>
          <KnobParam label="Volume" w={100} v={0.5} val="-5.1 dB" />
        </Section>
      </NyRow>
    </NylonBody>
  </Panel>
);

const SaturatorPanel = () => (
  <Panel $w={314} $ml={19}>
    <PanelHead>
      <PowerDot />
      <RoundIcon><Caret $s={14} /></RoundIcon>
      Saturator
    </PanelHead>
    <SatBody>
      <SatDisplay>
        <SatSelect>Analog Clip<Caret $s={13} $c="#111" /></SatSelect>
        <SatGraph viewBox="0 0 299 132" fill="none">
          <rect x="1" y="1" width="310" height="130" stroke="#4a4a4a" strokeWidth="2" />
          <path d="M1 66H299M207 1V131" stroke="#4a4a4a" strokeWidth="2" />
          <path d="M1 108C60 107 100 108 125 98L299 31" stroke={CYAN} strokeWidth="2.5" />
        </SatGraph>
        <SatFoot>
          <NoClip>No Clip<Caret $s={10} $c={CYAN} /></NoClip>
          <ColorBtn>Color</ColorBtn>
          <AmText>Am</AmText>
        </SatFoot>
      </SatDisplay>
      <SatKnobs>
        <KnobCol $w={134} $ml={15} $pt={8}>
          <KLabel>Drive</KLabel>
          <Knob d={52} v={0.55} sw={5} inner={0.1} />
          <KLabel $mt={-2}>4.1 dB</KLabel>
        </KnobCol>
        <KnobCol $w={134} $pt={8}>
          <KLabel>Output</KLabel>
          <Knob d={52} v={0.9} sw={5} inner={0.1} />
          <KLabel $mt={-2}>0.0 dB</KLabel>
        </KnobCol>
      </SatKnobs>
    </SatBody>
  </Panel>
);

const ToolbarLeft = () => (
  <>
    <Cell $w={78} $bare $align="flex-start">
      <svg width="46" height="26"><rect width="8" height="26" fill={ORANGE} /><rect x="13" width="22" height="26" fill={ORANGE} /></svg>
      <Caret $s={13} $c="#555" />
    </Cell>
    <Cell $w={111} $align="space-between" $pad={7} $pl={26}>Link<Caret $s={9} /></Cell>
    <Cell $w={50}>Tap</Cell>
    <Cell $w={84}>145.00</Cell>
    <Cell $w={34}><BarsIcon /></Cell>
    <Cell $w={34}><BarsIcon /></Cell>
    <Cell $w={83}>4  /  4</Cell>
    <Cell $w={75}>0%</Cell>
    <Cell $w={77}><svg width="36" height="20"><circle cx="9" cy="10" r="7" fill="none" stroke="#aaa" strokeWidth="2" /><circle cx="26" cy="10" r="8" fill="#aaa" /></svg><Caret $s={9} /></Cell>
    <Cell $w={89} $align="space-between" $pad={7}>1 Bar<Caret $s={9} /></Cell>
    <Cell $w={33} $ml={38}>♭♯</Cell>
    <Cell $w={87} $dim $align="space-between" $pad={8}>C<Caret $s={9} $c="#555" /></Cell>
    <Cell $w={139} $dim $align="space-between" $pad={8}>Major<Caret $s={9} $c="#555" /></Cell>
    <Cell $w={42} $ml={37} $on>
      <svg width="28" height="18" fill="#111"><path d="M2 8h9V2l7 7-7 7v-6H2zM21 8h2v2h-2zM25 8h2v2h-2z" /></svg>
    </Cell>
    <Cell $w={162} $ws={2} $pl={24}>{'25 .   4 .   3'}</Cell>
    <Transport>
      <svg width="26" height="28" fill="#b8b8b8"><path d="M0 0l26 14L0 28z" /></svg>
      <svg width="26" height="26"><rect width="26" height="26" fill="#b8b8b8" /></svg>
      <svg width="26" height="26"><circle cx="13" cy="13" r="13" fill="#b8b8b8" /></svg>
    </Transport>
  </>
);

const ToolbarRight = () => (
  <>
    <Cell $w={34} $ml={33}><svg width="20" height="20" stroke="#b0b0b0" strokeWidth="2"><path d="M10 1v18M1 10h18" /></svg></Cell>
    <Cell $w={34} $on><svg width="22" height="24" fill="none" stroke="#111" strokeWidth="2"><circle cx="6" cy="19" r="3.5" /><circle cx="16" cy="5" r="3.5" /><path d="M14 8L8 16" /></svg></Cell>
    <Cell $w={33}><svg width="20" height="18" fill="#6a6a6a"><path d="M1 9l9-8v5h9v6h-9v5z" /></svg></Cell>
    <Cell $w={33}><svg width="22" height="24" fill="none" stroke="#5a5a5a" strokeWidth="2"><path d="M1 7V1h6M15 1h6v6M1 17v6h6M15 23h6v-6" /></svg></Cell>
    <Cell $w={34}><svg width="22" height="24" fill="none" stroke="#999" strokeWidth="2"><circle cx="11" cy="12" r="8" /></svg></Cell>
    <Cell $w={163} $ml={38} $ws={2} $pl={12}>{'25 .   1 .   1'}</Cell>
    <Cell $w={40}><svg width="28" height="24" fill="none" stroke="#aaa" strokeWidth="2.5"><path d="M1 3h9l8 18h9" /></svg></Cell>
    <Cell $w={42} $on><svg width="26" height="28" fill="none" stroke="#111" strokeWidth="2"><path d="M9 22H5a2 2 0 0 1-2-2V7a2 2 0 0 1 2-2h16a2 2 0 0 1 2 2v13a2 2 0 0 1-2 2h-6M12 18l-4 4 4 4" /><path d="M3 5h20" strokeWidth="4" /></svg></Cell>
    <Cell $w={41}><svg width="28" height="24" fill="none" stroke="#aaa" strokeWidth="2.5"><path d="M1 21h9l8-18h9" /></svg></Cell>
    <Cell $w={163} $ws={5}>{'8 .   0 .   0'}</Cell>
    <Cell $w={34} $ml={45}><svg width="22" height="26" fill="#aaa"><path d="M14 1l4 3-9 15-4 2 0-5zM1 23h20v2H1z" /></svg></Cell>
    <Cell $w={33} $on><svg width="22" height="26"><rect x="1" y="1" width="20" height="24" fill="none" stroke="#111" strokeWidth="2" /><path d="M6 2h3v14H6zM13 2h3v14h-3z" fill="#111" /></svg></Cell>
    <Cell $w={52}>Key</Cell>
    <SmallCell $w={16} />
    <Cell $w={54}>MIDI</Cell>
    <Cell $w={96}>48.0 kHz</Cell>
    <Cell $w={8} $bare><svg width="6" height="30"><rect width="6" height="30" fill={ORANGE} /></svg></Cell>
    <Cell $w={99} $align="space-between" $pad={8} $pl={15}>8 %<Caret $s={9} /></Cell>
    <Cell $w={56} />
    <SmallCell $w={15} />
    <Cell $w={25} $ml={30} $bare><svg width="25" height="26" stroke="#555" strokeWidth="2"><path d="M3 1v24M12 1v24M21 1v24" /></svg></Cell>
    <Cell $w={26} $ml={14} $bare><svg width="26" height="26" fill={ORANGE}><rect width="26" height="5" /><rect y="10" width="26" height="5" /><rect y="21" width="26" height="5" /></svg></Cell>
  </>
);

export default function App() {
  return (
    <>
      <GlobalStyle />
      <Page>
        <Window>
          <TitleBar>
            <Lights>
              <Light $c="#ee6a5f" $dot />
              <Light $c="#f5be4f" />
              <Light $c="#61c554" />
            </Lights>
            <Title>eightoeight</Title>
            <span />
          </TitleBar>
          <Toolbar>
            <ToolbarLeft />
            <ToolbarRight />
          </Toolbar>
          <MainRow>
            <BrowserPanel />
            <ArrangementPanel />
          </MainRow>
          <DeviceRow>
            <Panel $w={457}>
              <PanelHead>Main Lane</PanelHead>
              <LaneText>{`Displays the track's clips. Click and drag to
select time, then use any available Edit menu
command to edit.

[Cmd + Arrow Up/Down] Insert Clips from
Previous/Next Take Lane
[Cmd + Opt + Drag] Scroll Display
[Cmd + Scroll Wheel] Zoom In/Out
[Opt + Scroll Wheel] Adjust Lane Height`}</LaneText>
            </Panel>
            <ArpeggiatorPanel />
            <NylonPanel />
            <SaturatorPanel />
          </DeviceRow>
          <StatusBar>
            <InfoDot>i</InfoDot>
            <StatusField $w={1553} $mr={22} $pl={12}>Insert Mark 9.1.1 (Time: 0:13:241)</StatusField>
            <StatusField $w={432} $mr={21}>
              <PlayBox><Tri /></PlayBox>
            </StatusField>
            <OrangeSquare><UpMark /></OrangeSquare>
            <TrackName>10-Nylon Flamenco Guitar</TrackName>
            <Thumbs viewBox="0 0 352 46">
              {thumbRects()}
              <rect x="2" y="2" width="157" height="42" rx="8" fill="none" stroke="#8a8a8a" strokeWidth="4" />
            </Thumbs>
            <MeterIcon viewBox="0 0 60 30">
              <path d="M3 14v14M14 4v24M25 10v18M36 7v21" stroke="#4a4a4a" strokeWidth="4" />
              <path d="M46 10h12l-6 9z" fill="#4a4a4a" />
            </MeterIcon>
          </StatusBar>
        </Window>
      </Page>
    </>
  );
}
